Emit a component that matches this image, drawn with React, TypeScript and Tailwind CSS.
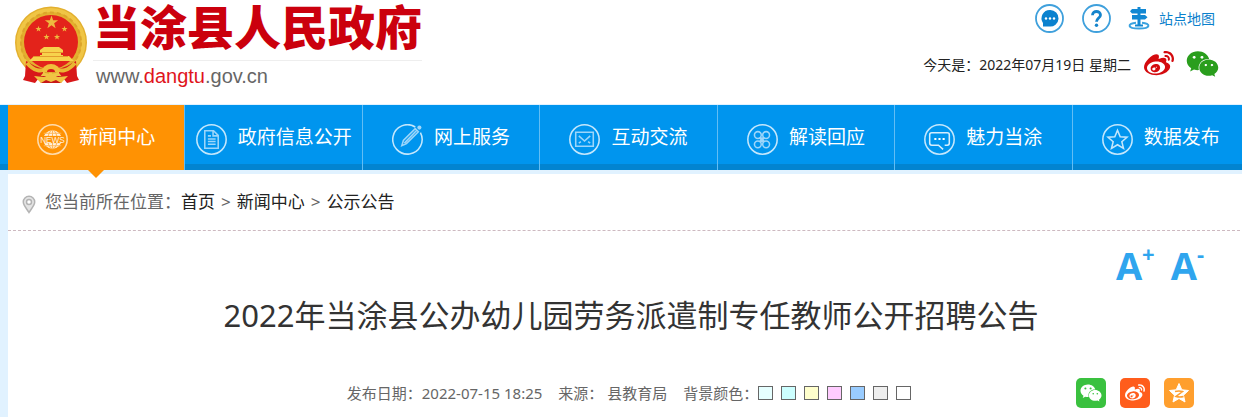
import type { ReactNode } from 'react';
import { FaWeibo, FaWeixin } from 'react-icons/fa';

interface NavItem {
  label: string;
  icon: ReactNode;
  active?: boolean;
}

function Star({ cx, cy, r }: { cx: number; cy: number; r: number }) {
  const points = Array.from({ length: 10 }, (_, i) => {
    const angle = (Math.PI / 5) * i - Math.PI / 2;
    const radius = i % 2 === 0 ? r : r * 0.4;
    return `${cx + radius * Math.cos(angle)},${cy + radius * Math.sin(angle)}`;
  }).join(' ');
  return <polygon points={points} />;
}

function Emblem() {
  return (
    <svg viewBox="0 0 72 78" className="w-[72px] h-[78px] shrink-0" aria-hidden="true">
      <circle cx="36" cy="36.500" r="36" fill="#e3b02f" />
      <circle cx="36" cy="36.500" r="32.500" fill="none" stroke="#f0c545" strokeWidth="4" />
      <circle cx="36" cy="36.500" r="30" fill="none" stroke="#dca42a" strokeWidth="2" strokeDasharray="4 3" />
      <circle cx="36" cy="36" r="27" fill="#e3231b" />
      <g fill="#eeb93f">
        <Star cx={36.5} cy={16.5} r={7} />
        <Star cx={23.5} cy={23} r={3.2} />
        <Star cx={49.5} cy={23} r={3.2} />
        <Star cx={31.5} cy={31} r={3.2} />
        <Star cx={42} cy={31} r={3.2} />
      </g>
      <g fill="#f7d24c">
        <path d="M29 41h15l4 3v2H25v-2z" />
        <path d="M27 45h19v4h2v1h6l5 5H14l5-5h6v-1h2z" />
      </g>
      <path d="M25 46.500h23M19 50.500h34" stroke="#e39a2c" strokeWidth="1" />
      <path d="M11 55l9 5 8 3v4l-8 10-12-3 2-4z" fill="#d8181a" />
      <path d="M61 55l-9 5-8 3v4l8 10 12-3-2-4z" fill="#d8181a" />
      <path d="M22 70h28l-4 7H26z" fill="#c81717" />
      <path d="M12 57c7 8 14 9 18 6M60 57c-7 8-14 9-18 6" fill="none" stroke="#e9b833" strokeWidth="4" />
      <path d="M27 66a9 8 0 0 1 18 0z" fill="#f0bf3c" />
      <path d="M32 66a4 3 0 0 1 8 0z" fill="#d8181a" />
      <path d="M19 70l10 1 7-3 7 3 10-1-7 7-5-3-5 2-5-2-5 3z" fill="#f0c443" />
    </svg>
  );
}

function NavIcon({ children }: { children?: ReactNode }) {
  return (
    <svg
      viewBox="0 0 30 30"
      className="w-[31px] h-[31px] shrink-0"
      fill="none"
      stroke="#9dd6fa"
      strokeWidth="1.500"
      aria-hidden="true"
    >
      <circle cx="15" cy="15" r="14.200" stroke="#c4e7fc" />
      {children}
    </svg>
  );
}

const NAV: NavItem[] = [
  {
    label: '新闻中心',
    active: true,
    icon: (
      <svg viewBox="0 0 30 30" className="w-[31px] h-[31px] shrink-0" fill="none" aria-hidden="true">
        <circle cx="15" cy="15" r="14.200" stroke="#ffdcae" strokeWidth="1.500" />
        <circle cx="15" cy="15" r="9" fill="#fff3e0" />
        <path d="M15 6v18M6.500 9h17M6.500 21h17" stroke="#ffb75a" strokeWidth="1" />
        <ellipse cx="15" cy="15" rx="4.500" ry="9" stroke="#ffb75a" />
        <rect x="3" y="11.500" width="24" height="7" fill="#ff9203" />
        <text
          x="15"
          y="18"
          textAnchor="middle"
          fontSize="8"
          fontFamily="Liberation Sans, sans-serif"
          fill="#fff3e0"
        >
          NEWS
        </text>
      </svg>
    ),
  },
  {
    label: '政府信息公开',
    icon: (
      <NavIcon>
        <path d="M8.500 6.500h8.500l4.500 4.500v12.500h-13zM16.500 6.500V11.500h5" />
        <path d="M11.500 11.500h3M11.500 14.500h7.500M11.500 17h7.500M11.500 19.500h7.500" />
      </NavIcon>
    ),
  },
  {
    label: '网上服务',
    icon: (
      <svg
        viewBox="0 0 30 30"
        className="w-[31px] h-[31px] shrink-0"
        fill="none"
        stroke="#c4e7fc"
        strokeWidth="1.500"
        aria-hidden="true"
      >
        <path d="M22.500 2.900A14.200 14.200 0 1 0 27.500 8.300" />
        <path d="M9.500 21l1.500-5L22.500 4.500l3 3L14 19zM12 18.500L24 6" stroke="#9dd6fa" />
        <circle cx="26.500" cy="3.500" r="2" fill="#9dd6fa" stroke="none" />
      </svg>
    ),
  },
  {
    label: '互动交流',
    icon: (
      <NavIcon>
        <path d="M6.500 8h17v13.500h-17zM9.500 11.500l5.500 5 5.500-5M9.500 18.500l2-1.500M20.500 18.500l-2-1.500" />
      </NavIcon>
    ),
  },
  {
    label: '解读回应',
    icon: (
      <NavIcon>
        <circle cx="10.500" cy="10.700" r="3.300" />
        <circle cx="18.500" cy="10.700" r="3.300" />
        <circle cx="10.500" cy="19.700" r="3.300" />
        <circle cx="18.500" cy="19.700" r="3.300" />
        <path d="M12.500 13l4 4.500M16.500 13l-4 4.500" strokeWidth="2.500" />
      </NavIcon>
    ),
  },
  {
    label: '魅力当涂',
    icon: (
      <NavIcon>
        <path
          d="M13 20.500H7.500q-2 0-2-2v-8q0-2 2-2h15q2 0 2 2v8q0 2-2 2H20M12 20.500h2l4.500 4"
          stroke="#d6eefd"
        />
        <path d="M10 14.500h2M14 14.500h2M18 14.500h2" strokeWidth="2" stroke="#fff" />
      </NavIcon>
    ),
  },
  {
    label: '数据发布',
    icon: (
      <NavIcon>
        <path
          d="M15 6l2.600 6.300 6.600.5-5 4.300 1.600 6.500L15 20.100l-5.800 3.500 1.600-6.500-5-4.300 6.600-.5z"
          stroke="#c4e7fc"
        />
      </NavIcon>
    ),
  },
];

const SWATCHES = [
  { name: '浅青', className: 'bg-[#e6ffff]' },
  { name: '青色', className: 'bg-[#ccffff]' },
  { name: '黄色', className: 'bg-[#ffffcc]' },
  { name: '粉色', className: 'bg-[#ffccff]' },
  { name: '蓝色', className: 'bg-[#99ccff]' },
  { name: '灰色', className: 'bg-[#eeeeee]' },
  { name: '白色', className: 'bg-white' },
];

function Header() {
  return (
    <header className="flex justify-between bg-white h-[104px] pl-[15px] pr-[23px]">
      <a href="#" className="flex gap-[6px] pt-[6px]">
        <Emblem />
        <div className="flex flex-col font-['Liberation_Sans','Noto_Sans_CJK_SC',sans-serif]">
          <span className="text-[47px] leading-[46px] font-black text-[#cb000d] whitespace-nowrap">
            当涂县人民政府
          </span>
          <span className="mt-2 pt-1 pl-[3px] border-t border-[#eeeeee] text-[20px] leading-[22px] text-[#666]">
            www.<span className="text-[#e0141c]">dangtu</span>.gov.cn
          </span>
        </div>
      </a>

      <div className="flex flex-col items-end text-[14px]">
        <div className="flex items-center pt-1 pr-1">
          <a href="#" aria-label="互动" className="mr-[18px]">
            <svg viewBox="0 0 29 29" className="w-[29px] h-[29px]" aria-hidden="true">
              <circle cx="14.500" cy="14.500" r="13.500" fill="none" stroke="#3fa0dc" strokeWidth="1.800" />
              <path d="M15 6a8.300 8.300 0 1 1-1 16.500H8v-3.500A8.300 8.300 0 0 1 15 6z" fill="#0b82cf" />
              <g fill="#fff">
                <circle cx="11" cy="14.500" r="1.200" />
                <circle cx="15" cy="14.500" r="1.200" />
                <circle cx="19" cy="14.500" r="1.200" />
              </g>
            </svg>
          </a>
          <a href="#" aria-label="帮助" className="mr-[17px]">
            <svg viewBox="0 0 29 29" className="w-[29px] h-[29px]" fill="none" aria-hidden="true">
              <circle cx="14.500" cy="14.500" r="13.500" stroke="#3fa0dc" strokeWidth="1.800" />
              <path
                d="M10.500 11.200c0-5 8-4.800 8-.2 0 3-4 3.200-4 6.800"
                stroke="#1484cc"
                strokeWidth="2.800"
              />
              <circle cx="14.500" cy="21.200" r="1.700" fill="#1484cc" />
            </svg>
          </a>
          <a href="#" className="flex items-center gap-[9px] text-[#0a80cc]">
            <svg viewBox="0 0 22 23" className="w-[22px] h-[23px]" aria-hidden="true">
              <path d="M9.500 0h3v19h-3z" fill="#1288d3" />
              <path d="M4 2h14v4.500H4L2 4.200zM4 8h13l2.500 2.200L17 12.500H4z" fill="#1288d3" />
              <path
                d="M8 15.800C-1 16.500-1 21.500 11 21.500s12-5 3-5.700"
                fill="none"
                stroke="#3aa2df"
                strokeWidth="2"
              />
              <path d="M7 17.500h8v2H7z" fill="#1288d3" />
            </svg>
            站点地图
          </a>
        </div>

        <div className="flex items-center pt-4 text-[#222]">
          <span className="mr-3 whitespace-nowrap">今天是：2022年07月19日 星期二</span>
          <a href="#" aria-label="微博" className="mr-[11px] text-[#d40a0e]">
            <FaWeibo className="w-8 h-[30px]" />
          </a>
          <a href="#" aria-label="微信" className="text-[#2a9e1d]">
            <FaWeixin className="w-[33px] h-[30px]" />
          </a>
        </div>
      </div>
    </header>
  );
}

function MainNav() {
  return (
    <nav className="border-t border-[#e1f2ff] bg-[#0095ee]">
      <div className="border-b-[6px] border-[#0284d0]">
        {/* Bottom strip is overlapped by the separators and the active tab */}
        <ul className="grid grid-cols-7 ml-2 -mr-2 -mb-[6px]">
          {NAV.map((item) => (
            <li
              key={item.label}
              className={
                item.active
                  ? 'relative z-10 bg-[#ff9203] border-r border-[#62bdf4]'
                  : 'relative border-r border-[#62bdf4]'
              }
            >
              <a
                href="#"
                className="flex items-center justify-center gap-[11px] h-[65px] text-[19px] text-white whitespace-nowrap"
              >
                <span className="pt-[3px]">{item.icon}</span>
                {item.label}
              </a>
              {item.active && (
                <span className="absolute top-full left-1/2 -translate-x-1/2 border-x-8 border-t-8 border-x-transparent border-t-[#ff9203]" />
              )}
            </li>
          ))}
        </ul>
      </div>
    </nav>
  );
}

function Breadcrumb() {
  return (
    <div className="flex items-center h-[57px] pl-[14px] border-b border-dashed border-[#cdb9c0] text-[17px] text-[#666]">
      <svg viewBox="0 0 14 19" className="w-[14px] h-[19px] mt-1 mr-[9px]" fill="none" aria-hidden="true">
        <path
          d="M7 1.200a5.700 5.700 0 0 1 5.700 5.800C12.700 10.500 9 14 7 17.500 5 14 1.300 10.500 1.300 7A5.700 5.700 0 0 1 7 1.200z"
          fill="#e4e4e4"
          stroke="#b3b3b3"
          strokeWidth="1.500"
        />
        <circle cx="7" cy="7" r="2.500" fill="#fff" stroke="#b3b3b3" strokeWidth="1.500" />
      </svg>
      <span>您当前所在位置：</span>
      <div className="flex gap-[6px]">
        <a href="#" className="text-[#222]">首页</a>
        <span>&gt;</span>
        <a href="#" className="text-[#222]">新闻中心</a>
        <span>&gt;</span>
        <a href="#" className="text-[#222]">公示公告</a>
      </div>
    </div>
  );
}

function ShareLinks() {
  return (
    <div className="flex justify-end gap-[14px] pr-14 text-white">
      <a href="#" aria-label="分享到微信" className="flex items-center justify-center w-[30px] h-[30px] rounded-[5px] bg-[#3ac13f]">
        <FaWeixin className="w-[22px] h-5" />
      </a>
      <a href="#" aria-label="分享到微博" className="flex items-center justify-center w-[30px] h-[30px] rounded-[5px] bg-[#ff5d1c]">
        <FaWeibo className="w-[22px] h-5" />
      </a>
      <a href="#" aria-label="分享到QQ空间" className="flex items-center justify-center w-[30px] h-[30px] rounded-[5px] bg-[#ff9f2e]">
        <svg viewBox="0 0 22 22" className="w-[22px] h-[22px]" aria-hidden="true">
          <path
            d="M11 1.500l2.800 6.300 6.700.7-5 4.700 1.500 6.800-6-3.500-6 3.500 1.500-6.800-5-4.700 6.700-.7z"
            fill="#fff"
            stroke="#fff"
            strokeLinejoin="round"
          />
          <path d="M7 9.500q4-1 7.500 0L8 14.500q4 1 7.500 0" fill="none" stroke="#ff9f2e" strokeWidth="1.500" />
        </svg>
      </a>
    </div>
  );
}

function Article() {
  return (
    <article>
      <div className="flex justify-end gap-4 pt-[10px] pb-[2px] pr-[46px] font-['Open_Sans',sans-serif] font-bold text-[#2fa5ee]">
        <button type="button" aria-label="放大字体" className="flex text-[38px] leading-[48px]">
          A<span className="text-[22px] leading-6">+</span>
        </button>
        <button type="button" aria-label="缩小字体" className="flex text-[38px] leading-[48px]">
          A<span className="text-[22px] leading-6">-</span>
        </button>
      </div>

      <h1 className="pl-1 text-center text-[31px] leading-[48px] text-[#333]">
        2022年当涂县公办幼儿园劳务派遣制专任教师公开招聘公告
      </h1>

      <div className="grid grid-cols-[1fr_auto_1fr] items-center mt-[39px] pb-2 text-[15px] text-[#666]">
        <div className="col-start-2 flex items-center gap-4">
          <span>发布日期：2022-07-15 18:25</span>
          <span>来源： 县教育局</span>
          <div className="flex items-center">
            <span>背景颜色：</span>
            <div className="flex gap-2">
              {SWATCHES.map((swatch) => (
                <button
                  key={swatch.name}
                  type="button"
                  aria-label={swatch.name}
                  className={`w-[15px] h-[14px] border border-[#666] ${swatch.className}`}
                />
              ))}
            </div>
          </div>
        </div>
        <ShareLinks />
      </div>
    </article>
  );
}

export default function App() {
  return (
    <div
      lang="zh-CN"
      className="flex flex-col min-h-screen overflow-x-clip bg-[#e1f2ff] font-['Noto_Sans','Noto_Sans_CJK_SC',sans-serif]"
    >
      <Header />
      <MainNav />
      <main className="grow mt-1 ml-2 -mr-2 bg-white">
        <Breadcrumb />
        <Article />
      </main>
    </div>
  );
}
